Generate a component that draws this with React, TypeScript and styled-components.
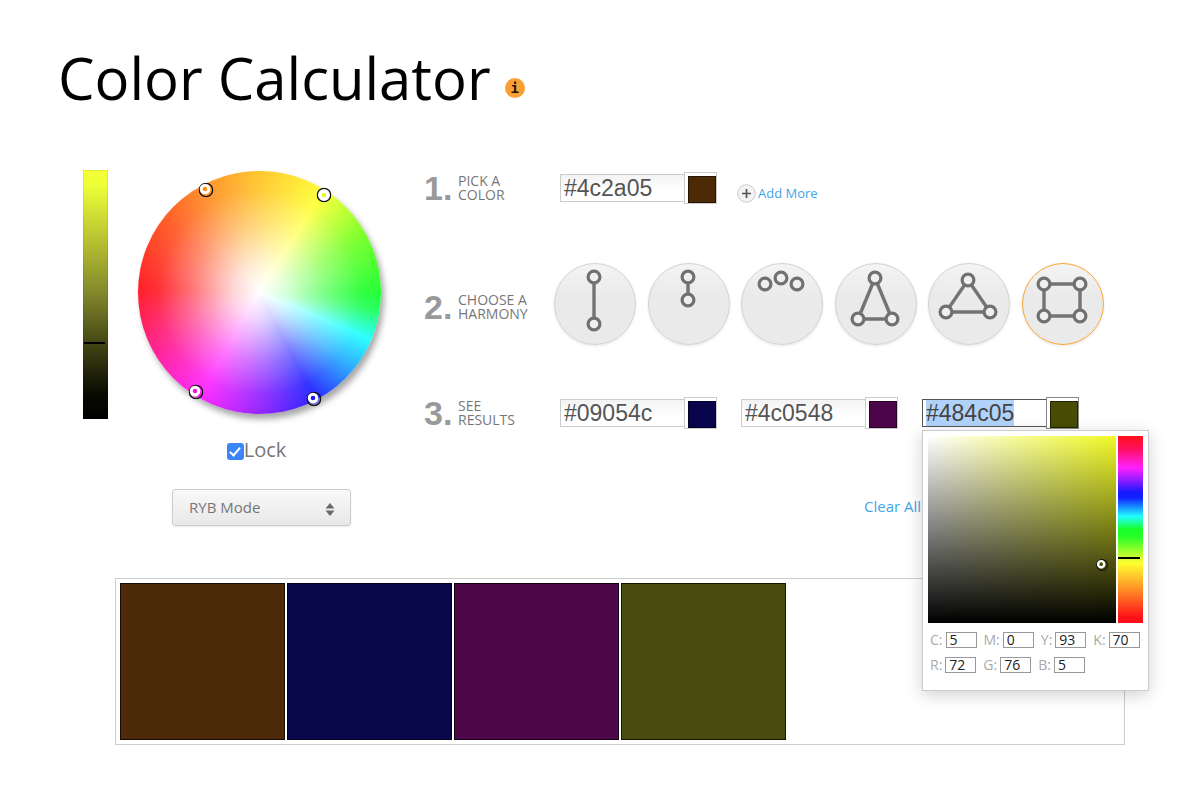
import React, { useEffect, useRef, useState } from "react";
import styled, { createGlobalStyle, css } from "styled-components";

const sans = `"Open Sans", "Noto Sans", sans-serif`;
const arial = `"Liberation Sans", Arial, sans-serif`;

const GlobalStyle = createGlobalStyle`
  *, *::before, *::after { box-sizing: border-box; }
  body { margin: 0; background: #fff; color: #777; font-family: ${sans}; }
  button, input, select { font-family: inherit; margin: 0; }
`;

const Page = styled.div`
  padding: 38px 32px 52px 58px;
`;

const Header = styled.header`
  display: flex;
  align-items: center;
  gap: 14px;
`;

const Title = styled.h1`
  margin: 0;
  color: #000;
  font-size: 58px;
  line-height: 80px;
  font-weight: 400;
  white-space: nowrap;
`;

const InfoButton = styled.button`
  width: 20px;
  height: 20px;
  margin-top: 20px;
  padding: 0;
  border: 0;
  border-radius: 50%;
  background: #fa9f35;
  color: #1a1208;
  font-family: "DejaVu Sans Mono", monospace;
  font-size: 14px;
  line-height: 18px;
  font-weight: 700;
`;

const Main = styled.main`
  display: flex;
  align-items: flex-start;
  gap: 42px;
  margin-top: 52px;
  padding-left: 25px;
`;

const WheelPanel = styled.section`
  flex: none;
  width: 299px;
`;

const WheelRow = styled.div`
  display: flex;
  gap: 30px;
`;

const ValueBar = styled.div`
  position: relative;
  width: 25px;
  height: 249px;
  background: linear-gradient(#f4ff38, #eeff38 6%, #81862a 50%, #3c3f12 72%, #0a0a03 90%, #000);
  box-shadow: inset 0 0 0 1px rgba(0, 0, 0, 0.08);
`;

const ValueMark = styled.span`
  position: absolute;
  left: 1px;
  width: 21px;
  height: 2px;
  background: #000;
`;

const Wheel = styled.div`
  position: relative;
  width: 243px;
  height: 243px;
  margin-top: 1px;
  border-radius: 50%;
  background:
    radial-gradient(circle closest-side, #fff 0, rgba(255, 255, 255, 0.82) 22%, rgba(255, 255, 255, 0.42) 56%, rgba(255, 255, 255, 0.14) 84%, rgba(255, 255, 255, 0.08) 100%),
    conic-gradient(
      #ffc21c 0deg, #ffff28 32deg, #6cff18 62deg, #10ff24 90deg, #14ff50 98deg,
      #18ffff 113deg, #18a0ff 130deg, #1414ff 152deg, #8c14ff 180deg, #ff18ff 210deg,
      #ff109c 236deg, #ff0c14 272deg, #ff4a14 306deg, #ff8c18 334deg, #ffc21c 360deg
    );
  box-shadow: 3px 5px 6px rgba(0, 0, 0, 0.35);
`;

const Handle = styled.svg<{ $size: number }>`
  position: absolute;
  width: ${(p) => p.$size}px;
  height: ${(p) => p.$size}px;
  transform: translate(-50%, -50%);
`;

const ModeControls = styled.div`
  display: flex;
  flex-direction: column;
  align-items: center;
  gap: 27px;
  margin: 19px 0 0 58px;
`;

const Lock = styled.label`
  display: flex;
  align-items: center;
  padding-right: 10px;
  font-size: 20px;
  line-height: 24px;
`;

const LockBox = styled.input`
  appearance: none;
  width: 17px;
  height: 17px;
  margin-top: 3px;
  border-radius: 3px;
  background: #3b85f7;
  display: grid;
  place-items: center;

  &::after {
    content: "";
    width: 6px;
    height: 11px;
    margin-top: -3px;
    border: solid #fff;
    border-width: 0 2px 2px 0;
    transform: rotate(40deg);
    opacity: 0;
  }
  &:checked::after { opacity: 1; }
`;

const ModeWrap = styled.div`
  position: relative;
  width: 179px;

  svg {
    position: absolute;
    right: 16px;
    top: 14px;
    pointer-events: none;
  }
`;

const ModeSelect = styled.select`
  appearance: none;
  display: block;
  width: 100%;
  height: 37px;
  padding: 0 16px 2px;
  border: 1px solid #ccc;
  border-radius: 3px;
  background: linear-gradient(#f9f9f9, #e8e8e8);
  box-shadow: 0 1px 2px rgba(0, 0, 0, 0.08);
  color: #777;
  font-size: 15px;
`;

const Steps = styled.section`
  flex: 1;
  min-width: 0;
`;

const Step = styled.div<{ $top?: number; $height: number }>`
  display: grid;
  grid-template-columns: 130px minmax(0, 1fr);
  align-items: center;
  height: ${(p) => p.$height}px;
  margin-top: ${(p) => p.$top ?? 0}px;
`;

const StepHead = styled.h2`
  display: flex;
  align-items: center;
  gap: 4px;
  margin: 0;
  font-size: 14px;
  line-height: 14px;
  font-weight: 400;
  text-transform: uppercase;
`;

const StepNumber = styled.span`
  width: 30px;
  color: #999;
  font-family: ${arial};
  font-size: 34px;
  line-height: 36px;
  font-weight: 700;
`;

const StepText = styled.span`
  display: grid;
`;

const FieldRow = styled.div`
  display: flex;
  align-items: center;
  gap: 24px;
  padding-left: 6px;
`;

const Field = styled.div`
  position: relative;
  display: flex;
  align-items: center;
  flex: none;
`;

const HexInput = styled.input<{ $active?: boolean }>`
  width: 124px;
  height: 28px;
  padding: 0 3px;
  border: 1px solid #ccc;
  border-right: 0;
  background: linear-gradient(#f3f3f3, #fff 60%);
  color: #555;
  font-family: ${arial};
  font-size: 23px;
  line-height: 26px;
  outline: 0;

  &::selection { background: #b1d3fa; color: #444; }

  ${(p) => p.$active && css`
    border-color: #555;
    background: #fff;
  `}
`;

const SwatchButton = styled.button<{ $color: string; $active?: boolean }>`
  width: 33px;
  height: 32px;
  padding: 3px 0 0 3px;
  border: 1px solid ${(p) => (p.$active ? "#888" : "#ccc")};
  background: #fff;

  &::before {
    content: "";
    display: block;
    height: 27px;
    border: 1px solid rgba(0, 0, 0, 0.5);
    background: ${(p) => p.$color};
  }
`;

const AddMore = styled.button`
  display: flex;
  align-items: center;
  gap: 2px;
  margin: 10px 0 0 -4px;
  padding: 0;
  border: 0;
  background: none;
  color: #3fa5ea;
  font-size: 13px;
  line-height: 18px;
  white-space: nowrap;
`;

const Harmonies = styled.div`
  display: flex;
  justify-content: space-between;
  align-self: start;
  max-width: 550px;
`;

const HarmonyButton = styled.button<{ $active?: boolean }>`
  flex: none;
  width: 82px;
  height: 82px;
  padding: 0;
  border: 1px solid ${(p) => (p.$active ? "#fba52f" : "#d2d2d2")};
  border-radius: 50%;
  background: linear-gradient(#f4f4f4, #eaeaea 40%);
  box-shadow: 0 1px 3px rgba(0, 0, 0, 0.1);

  svg { display: block; }
`;

const Clear = styled.div`
  margin-top: 63px;
  padding-left: 440px;
`;

const ClearLink = styled.a`
  color: #3fa5ea;
  font-size: 15px;
  line-height: 24px;
  text-decoration: none;
  white-space: nowrap;
`;

const Palette = styled.section`
  display: flex;
  gap: 2px;
  margin: 52px 25px 0 57px;
  padding: 4px;
  border: 1px solid #ccc;
`;

const PaletteTile = styled.div<{ $color: string }>`
  flex: 0 1 165px;
  height: 157px;
  border: 1px solid rgba(0, 0, 0, 0.7);
  background: ${(p) => p.$color};
`;

const Picker = styled.div`
  position: absolute;
  z-index: 2;
  top: 33px;
  left: 0;
  width: 227px;
  height: 261px;
  padding: 5px;
  border: 1px solid #ccc;
  background: #fff;
  box-shadow: 0 4px 16px rgba(0, 0, 0, 0.18);
`;

const PickerAreas = styled.div`
  display: flex;
  gap: 2px;
  height: 187px;
`;

const Shade = styled.div`
  position: relative;
  width: 188px;
  background: linear-gradient(transparent, #000), linear-gradient(90deg, #fff, #f0fa26);
`;

const HueStrip = styled.div`
  position: relative;
  width: 25px;
  background: linear-gradient(
    #ff1018 0, #ff1060 7%, #ff20ff 17%, #9c1cff 23%, #1818ff 30%, #1020ff 33%, #20ffff 43%,
    #18ff28 50%, #28ff28 54%, #ffff30 68%, #ffa028 80%, #ff1018 97%
  );
`;

const HueMark = styled.span`
  position: absolute;
  left: 0;
  width: 22px;
  height: 2px;
  background: #000;
`;

const Channels = styled.div`
  display: flex;
  gap: 7px;
  margin-top: 9px;
  padding-left: 2px;
`;

const Channel = styled.label`
  display: flex;
  align-items: center;
  gap: 3px;
  color: #aaa;
  font-size: 14px;
  line-height: 16px;
`;

const ChannelInput = styled.input`
  width: 31px;
  height: 16px;
  padding: 0 3px 2px;
  border: 1px solid #999;
  background: #fff;
  color: #222;
  font-size: 14px;
  line-height: 12px;
`;

type Point = [number, number];

const harmonies: { name: string; points: Point[]; lines: [number, number][] }[] = [
  { name: "Complementary", points: [[39, 13], [39, 60]], lines: [[0, 1]] },
  { name: "Monochromatic", points: [[39, 13], [39, 36]], lines: [[0, 1]] },
  { name: "Analogous", points: [[23, 20], [39, 14], [55, 20]], lines: [] },
  { name: "Split complementary", points: [[39, 14], [22, 55], [56, 55]], lines: [[0, 1], [0, 2], [1, 2]] },
  { name: "Triadic", points: [[39, 16], [17, 48], [61, 48]], lines: [[0, 1], [0, 2], [1, 2]] },
  { name: "Tetradic", points: [[21, 20], [57, 20], [57, 52], [21, 52]], lines: [[0, 1], [1, 2], [2, 3], [3, 0]] },
];

const handles = [
  { x: 68, y: 19, color: "#ff9018", shift: 1 },
  { x: 186, y: 24, color: "#e8f820", shift: 0 },
  { x: 58, y: 221, color: "#f018e8", shift: 1 },
  { x: 176, y: 228, color: "#1818ff", shift: 1 },
];

const palette = ["#4c2a0a", "#09084c", "#4c0848", "#484c0e"];

function HarmonyIcon({ points, lines }: { points: Point[]; lines: [number, number][] }) {
  return (
    <svg width="80" height="80" viewBox="0 0 80 80" aria-hidden="true">
      {lines.map(([a, b]) => (
        <line
          key={`${a}-${b}`}
          x1={points[a][0]} y1={points[a][1]} x2={points[b][0]} y2={points[b][1]}
          stroke="#717375" strokeWidth="3.4"
        />
      ))}
      {points.map(([x, y]) => (
        <circle key={`${x}-${y}`} cx={x} cy={y} r="5.9" fill="#efefef" stroke="#6e7072" strokeWidth="3.2" />
      ))}
    </svg>
  );
}

function ColorHandle({ x, y, color, shift, size = 15 }: { x: number; y: number; color: string; shift: number; size?: number }) {
  const c = 7.5 - shift;
  return (
    <Handle $size={size} viewBox="0 0 15 15" style={{ left: x, top: y }} aria-hidden="true">
      <circle cx="7.5" cy="7.5" r="6.7" fill={shift ? color : "#fff"} fillOpacity={shift ? 0.4 : 1} stroke="#111" strokeWidth="1.3" />
      <circle cx={c} cy={c} r="3.8" fill={color} stroke="#fff" strokeWidth="3" />
    </Handle>
  );
}

function ColorField({ label, value, active, children }: { label: string; value: string; active?: boolean; children?: React.ReactNode }) {
  const [text, setText] = useState(value);
  const ref = useRef<HTMLInputElement>(null);
  useEffect(() => {
    if (active) {
      ref.current?.focus();
      ref.current?.select();
    }
  }, [active]);
  return (
    <Field>
      <HexInput ref={ref} aria-label={label} value={text} $active={active} spellCheck={false} onChange={(e) => setText(e.target.value)} />
      <SwatchButton type="button" $color={value} $active={active} aria-label={`${label} swatch`} />
      {children}
    </Field>
  );
}

function ChannelRow({ values }: { values: [string, number][] }) {
  return (
    <Channels>
      {values.map(([name, value]) => (
        <Channel key={name}>
          {name}:
          <ChannelInput defaultValue={value} />
        </Channel>
      ))}
    </Channels>
  );
}

export default function App() {
  const [harmony, setHarmony] = useState("Tetradic");
  return (
    <>
      <GlobalStyle />
      <Page>
        <Header>
          <Title>Color Calculator</Title>
          <InfoButton type="button" aria-label="Information">i</InfoButton>
        </Header>

        <Main>
          <WheelPanel>
            <WheelRow>
              <ValueBar>
                <ValueMark style={{ top: 172 }} />
              </ValueBar>
              <Wheel>
                {handles.map((h) => <ColorHandle key={h.color} {...h} />)}
              </Wheel>
            </WheelRow>
            <ModeControls>
              <Lock>
                <LockBox type="checkbox" defaultChecked />
                Lock
              </Lock>
              <ModeWrap>
                <ModeSelect aria-label="Color mode" defaultValue="ryb">
                  <option value="ryb">RYB Mode</option>
                  <option value="rgb">RGB Mode</option>
                </ModeSelect>
                <svg width="10" height="14" viewBox="0 0 10 14" fill="#6a6a6a" aria-hidden="true">
                  <path d="M5 0 9.5 5.4h-9z M5 13 9.5 7.6h-9z" />
                </svg>
              </ModeWrap>
            </ModeControls>
          </WheelPanel>

          <Steps>
            <Step $height={36}>
              <StepHead>
                <StepNumber>1.</StepNumber>
                <StepText><span>Pick a</span><span>color</span></StepText>
              </StepHead>
              <FieldRow>
                <ColorField label="Base color" value="#4c2a05" />
                <AddMore type="button">
                  <svg width="19" height="19" viewBox="0 0 19 19" aria-hidden="true">
                    <circle cx="9.5" cy="9.5" r="8.8" fill="#f3f3f3" stroke="#ccc" />
                    <path d="M9.5 5v9M5 9.5h9" stroke="#555" strokeWidth="1.7" />
                  </svg>
                  Add More
                </AddMore>
              </FieldRow>
            </Step>

            <Step $height={88} $top={57}>
              <StepHead>
                <StepNumber>2.</StepNumber>
                <StepText><span>Choose a</span><span>harmony</span></StepText>
              </StepHead>
              <Harmonies>
                {harmonies.map((h) => (
                  <HarmonyButton
                    key={h.name}
                    type="button"
                    aria-label={h.name}
                    aria-pressed={harmony === h.name}
                    $active={harmony === h.name}
                    onClick={() => setHarmony(h.name)}
                  >
                    <HarmonyIcon points={h.points} lines={h.lines} />
                  </HarmonyButton>
                ))}
              </Harmonies>
            </Step>

            <Step $height={36} $top={44}>
              <StepHead>
                <StepNumber>3.</StepNumber>
                <StepText><span>See</span><span>results</span></StepText>
              </StepHead>
              <FieldRow>
                <ColorField label="Result 1" value="#09054c" />
                <ColorField label="Result 2" value="#4c0548" />
                <ColorField label="Result 3" value="#484c05" active>
                  <Picker>
                    <PickerAreas>
                      <Shade>
                        <ColorHandle x={174} y={129} color="#4a4d10" shift={1} size={12} />
                      </Shade>
                      <HueStrip>
                        <HueMark style={{ top: 121 }} />
                      </HueStrip>
                    </PickerAreas>
                    <ChannelRow values={[["C", 5], ["M", 0], ["Y", 93], ["K", 70]]} />
                    <ChannelRow values={[["R", 72], ["G", 76], ["B", 5]]} />
                  </Picker>
                </ColorField>
              </FieldRow>
            </Step>

            <Clear>
              <ClearLink href="#clear">Clear All</ClearLink>
            </Clear>
          </Steps>
        </Main>

        <Palette aria-label="Palette">
          {palette.map((color) => <PaletteTile key={color} $color={color} />)}
        </Palette>
      </Page>
    </>
  );
}
